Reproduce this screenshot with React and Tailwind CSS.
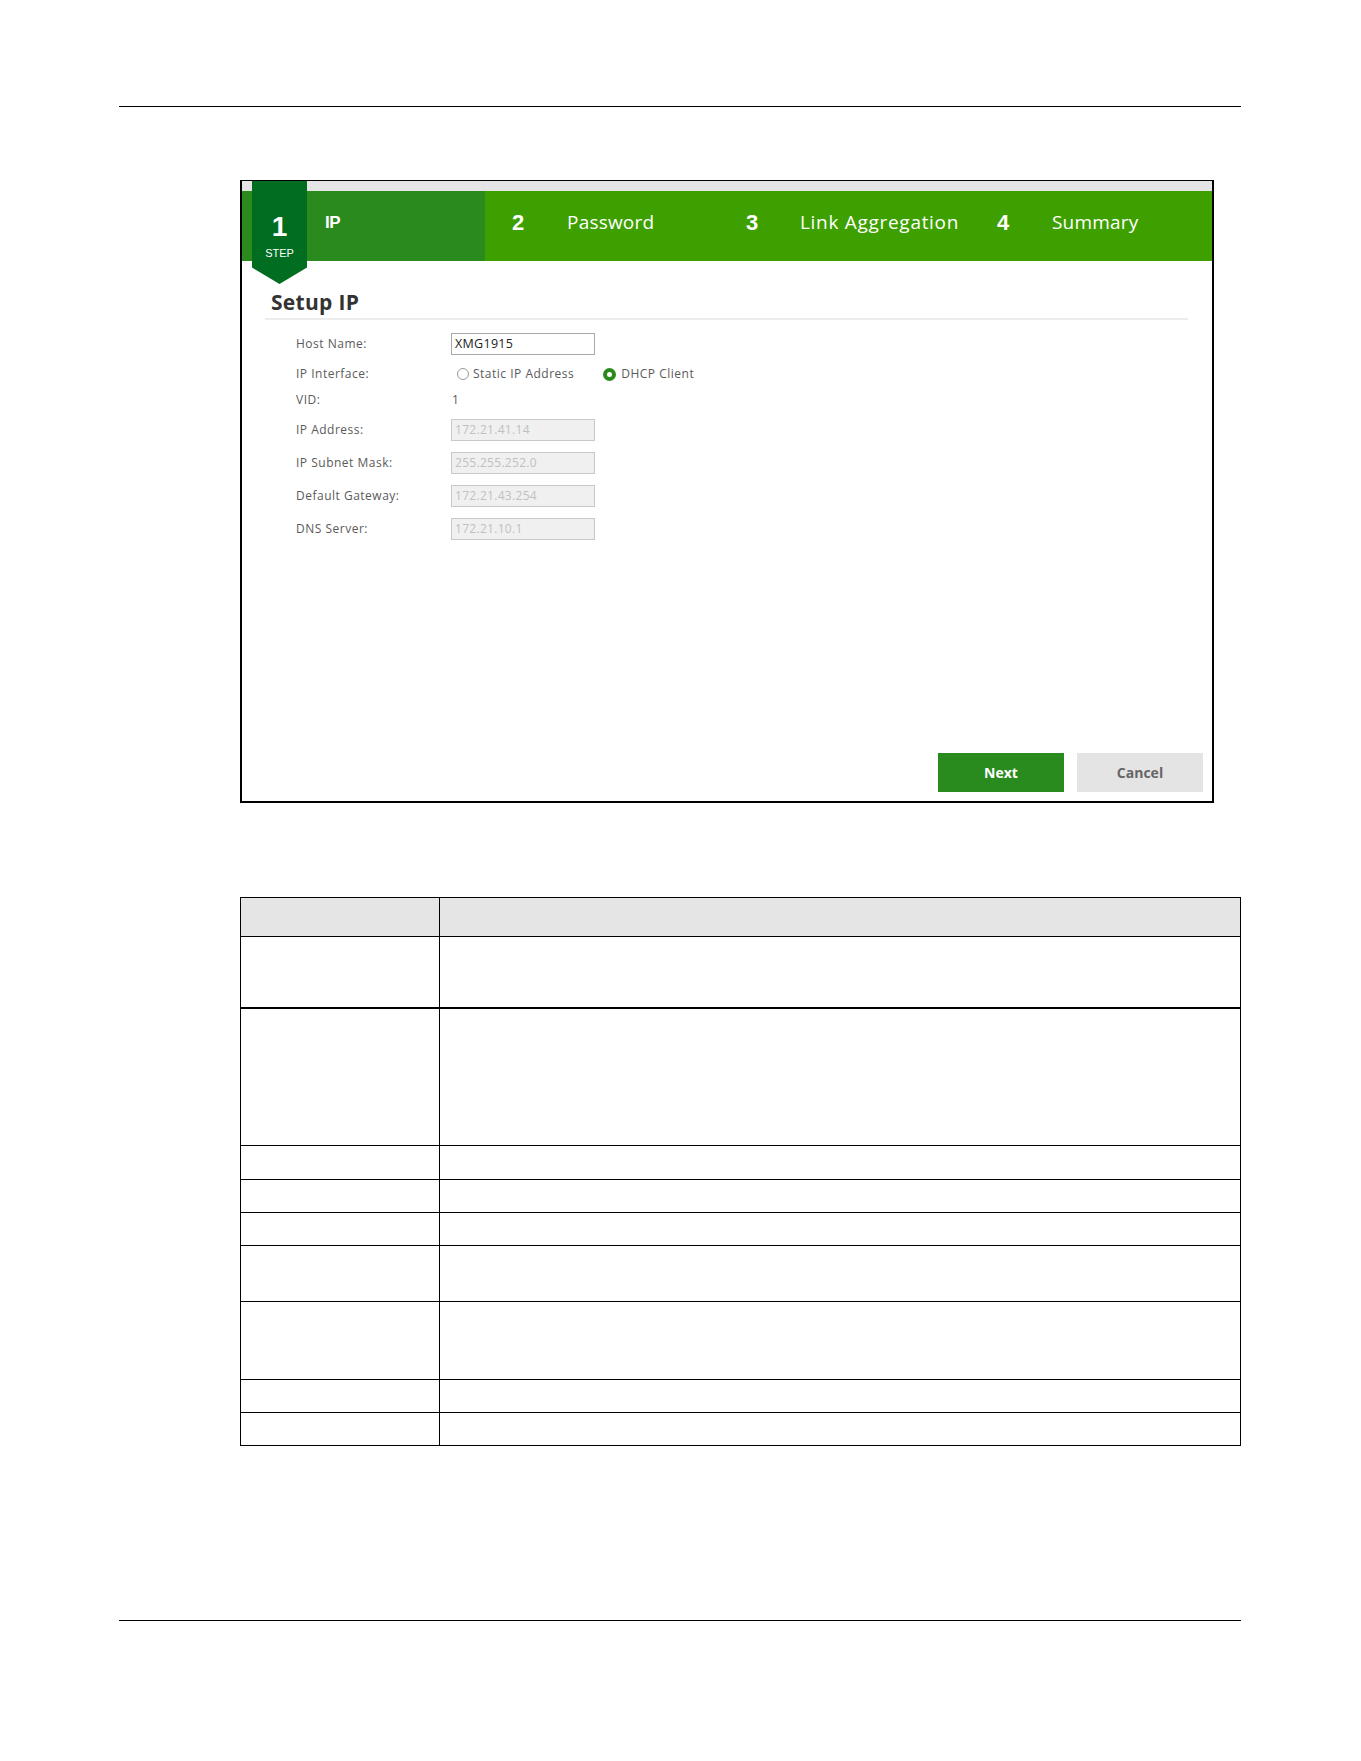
import React from "react";

function Radio({ checked }) {
  if (checked) {
    return <span className="inline-block w-[13px] h-[13px] rounded-full border-[4px] border-[#2a8a1e] bg-white" />;
  }
  return <span className="inline-block w-[12px] h-[12px] rounded-full border border-[#9a9a9a] bg-white" />;
}

function Row({ label, mt, children }) {
  return (
    <div className={`flex items-center h-[22px] ${mt}`}>
      <div className="w-[155px] text-[12px] tracking-[0.5px] text-[#5a5a5a]">{label}</div>
      <div className="flex items-center">{children}</div>
    </div>
  );
}

function DisabledInput({ value }) {
  return (
    <div className="w-[144px] h-[22px] border border-[#c8c8c8] bg-[#f0f0f0] text-[12px] tracking-[0.3px] text-[#c0c0c0] pl-[3px] flex items-center">
      {value}
    </div>
  );
}

// content heights; border added per row
const rows = [
  { h: 38, b: 0 },
  { h: 70, b: 1 },
  { h: 136, b: 2 },
  { h: 33, b: 1 },
  { h: 32, b: 1 },
  { h: 32, b: 1 },
  { h: 55, b: 1 },
  { h: 77, b: 1 },
  { h: 32, b: 1 },
  { h: 32, b: 1 },
];

export default function App() {
  return (
    <div className="w-[1361px] h-[1761px] bg-white font-['Open_Sans',sans-serif] overflow-hidden">
      <div className="pt-[106px] pl-[119px]">
        <div className="w-[1122px] h-[1px] bg-black" />
      </div>

      {/* Wizard panel */}
      <div className="ml-[240px] mt-[73px] w-[974px] h-[623px] border-2 border-t border-black relative flex flex-col">
        <div className="h-[10px] bg-[#e5e5e5]" />
        <div className="flex h-[70px]">
          <div className="w-[243px] bg-[#2a8a1e] flex items-center pl-[83px] pb-[6px]">
            <span className="text-white font-bold text-[17px] font-['Liberation_Sans',sans-serif] tracking-[-0.5px]">IP</span>
          </div>
          <div className="flex-1 bg-[#3e9f00] flex items-center pl-[27px] pb-[7px] text-white">
            <div className="w-[234px] flex items-center">
              <span className="w-[55px] font-bold text-[22px] font-['Liberation_Sans',sans-serif]">2</span>
              <span className="text-[19px] tracking-[0.2px]">Password</span>
            </div>
            <div className="w-[251px] flex items-center">
              <span className="w-[54px] font-bold text-[22px] font-['Liberation_Sans',sans-serif]">3</span>
              <span className="text-[19px] tracking-[0.7px]">Link Aggregation</span>
            </div>
            <div className="flex items-center">
              <span className="w-[55px] font-bold text-[22px] font-['Liberation_Sans',sans-serif]">4</span>
              <span className="text-[19px] tracking-[0.2px]">Summary</span>
            </div>
          </div>
        </div>

        {/* Step badge */}
        <div className="absolute left-[10px] top-0 w-[55px] h-[103px] bg-[#006d21] [clip-path:polygon(0_0,100%_0,100%_84%,50%_100%,0_84%)] flex flex-col items-center text-white font-['Liberation_Sans',sans-serif]">
          <div className="pt-[32px] text-[28px] leading-[28px] font-bold">1</div>
          <div className="mt-[7px] text-[11px] leading-[11px]">STEP</div>
        </div>

        <div className="ml-[23px] w-[923px] mt-[27px]">
          <div className="pl-[6px] text-[21px] leading-[28px] font-bold text-[#333] tracking-[0.3px]">Setup IP</div>
          <div className="mt-[2px] h-[2px] bg-[#ececec]" />
        </div>

        <div className="ml-[54px] mt-[13px]">
          <Row label="Host Name:" mt="">
            <div className="w-[144px] h-[22px] border border-[#a9a9a9] bg-white text-[12.5px] tracking-[0.3px] text-[#222] pl-[3px] flex items-center">
              XMG1915
            </div>
          </Row>
          <Row label="IP Interface:" mt="mt-[8px]">
            <div className="flex items-center pl-[6px]">
              <Radio />
              <span className="ml-[4px] text-[12px] tracking-[0.5px] text-[#5a5a5a]">Static IP Address</span>
              <span className="ml-[29px] flex items-center">
                <Radio checked />
              </span>
              <span className="ml-[5px] text-[12px] tracking-[0.5px] text-[#5a5a5a]">DHCP Client</span>
            </div>
          </Row>
          <Row label="VID:" mt="mt-[4px]">
            <span className="pl-[1px] text-[12px] text-[#5a5a5a]">1</span>
          </Row>
          <Row label="IP Address:" mt="mt-[8px]">
            <DisabledInput value="172.21.41.14" />
          </Row>
          <Row label="IP Subnet Mask:" mt="mt-[11px]">
            <DisabledInput value="255.255.252.0" />
          </Row>
          <Row label="Default Gateway:" mt="mt-[11px]">
            <DisabledInput value="172.21.43.254" />
          </Row>
          <Row label="DNS Server:" mt="mt-[11px]">
            <DisabledInput value="172.21.10.1" />
          </Row>
        </div>

        <div className="flex-1" />
        <div className="flex justify-end gap-[13px] pr-[9px] pb-[9px]">
          <button className="w-[126px] h-[39px] bg-[#298a1e] text-white font-bold text-[14px]">Next</button>
          <button className="w-[126px] h-[39px] bg-[#e4e4e4] text-[#666] font-bold text-[14px]">Cancel</button>
        </div>
      </div>

      {/* Table */}
      <div className="ml-[240px] mt-[94px] w-[1001px] border border-black">
        {rows.map((r, i) => (
          <div
            key={i}
            className={`flex ${i === 0 ? "bg-[#e5e5e5]" : r.b === 2 ? "border-t-2 border-black" : "border-t border-black"}`}
            style={{ height: r.h + r.b }}
          >
            <div className="w-[199px] border-r border-black" />
            <div className="flex-1" />
          </div>
        ))}
      </div>

      <div className="pl-[119px] mt-[174px]">
        <div className="w-[1122px] h-[1px] bg-black" />
      </div>
    </div>
  );
}
